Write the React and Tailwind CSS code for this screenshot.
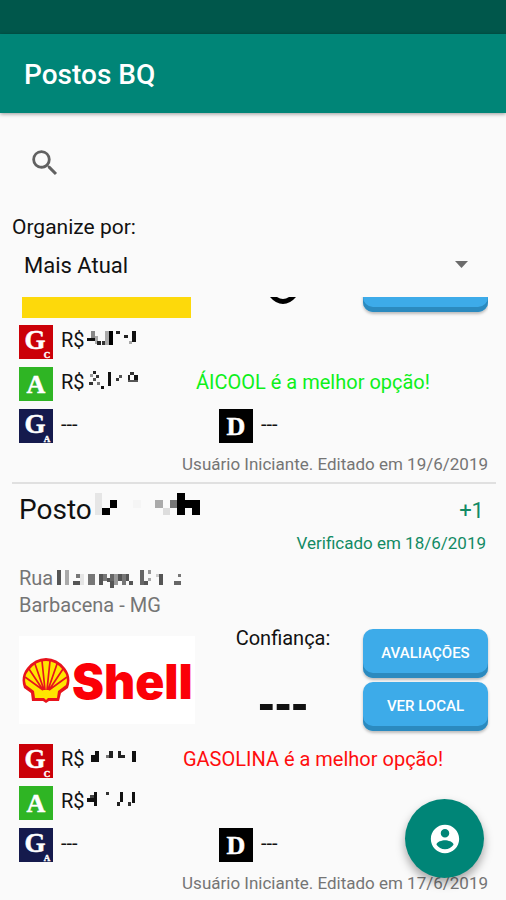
import React from "react";

const stations = {
  first: {
    fuels: [
      [[8,39,26,9,"#111"],[22,19,10,20,"#888"],[32,34,10,24,"#aaa"],[40,49,12,11,"#222"],[54,49,10,11,"#333"],[64,19,11,40,"#aaa"],[75,19,11,40,"#000"],[97,17,10,9,"#222"],[121,29,10,10,"#222"],[134,47,10,11,"#aaa"],[145,17,10,33,"#111"]],
      [[28,13,9,9,"#222"],[18,21,9,9,"#999"],[37,23,9,9,"#333"],[27,33,10,10,"#555"],[16,46,10,9,"#333"],[38,44,10,10,"#777"],[51,58,9,8,"#111"],[73,15,9,42,"#111"],[95,34,10,9,"#333"],[105,25,10,9,"#555"],[131,24,8,22,"#222"],[139,15,12,10,"#333"],[151,24,10,22,"#111"],[131,38,30,8,"#555"]],
    ],
  },
  second: {
    fuels: [
      [[22,33,22,20,"#111"],[34,22,10,12,"#111"],[66,32,10,9,"#777"],[76,22,10,19,"#222"],[101,22,9,19,"#222"],[110,32,12,9,"#222"],[145,21,10,34,"#111"]],
      [[8,37,30,10,"#111"],[18,27,12,10,"#444"],[30,18,9,42,"#111"],[65,18,9,9,"#333"],[108,18,9,30,"#111"],[98,49,10,10,"#222"],[144,18,9,34,"#111"],[131,49,11,11,"#333"]],
    ],
  },
};

const nameBlocks = [[0,0,22,67,"#e6e6e6"],[22,45,23,22,"#000"],[45,22,22,23,"#000"],[114,22,23,23,"#f5f5f5"],[180,22,23,23,"#aaa"],[203,45,22,22,"#ddd"],[225,22,22,23,"#777"],[247,0,22,67,"#000"],[269,22,46,23,"#000"],[292,45,23,22,"#000"]];

const streetBlocks = [[0,4,12,44,"#555"],[24,4,12,44,"#aaa"],[48,36,22,12,"#555"],[58,14,12,12,"#777"],[70,14,10,34,"#e5e5e5"],[92,14,22,34,"#777"],[126,14,11,34,"#555"],[137,14,12,22,"#777"],[149,26,10,12,"#555"],[160,14,11,22,"#666"],[160,36,11,20,"#555"],[171,14,12,34,"#999"],[183,14,11,22,"#555"],[196,14,10,34,"#777"],[206,14,11,22,"#555"],[217,36,10,12,"#555"],[250,4,12,44,"#666"],[262,36,10,12,"#555"],[272,4,11,11,"#999"],[272,26,11,11,"#aaa"],[306,14,11,34,"#555"],[296,14,10,11,"#ccc"],[362,14,11,11,"#777"],[350,36,23,12,"#666"]];

function Blocks({ blocks, className, viewBox }) {
  return (
    <svg className={className} viewBox={viewBox} aria-hidden="true" shapeRendering="crispEdges">
      {blocks.map(([x, y, w, h, fill], i) => (
        <rect key={i} x={x} y={y} width={w} height={h} fill={fill} />
      ))}
    </svg>
  );
}

function FuelIcon({ letter, sub, color }) {
  return (
    <svg className="size-[34px] shrink-0" viewBox="0 0 34 34" fill="#fff" fontFamily="'Liberation Serif', serif" fontWeight="700">
      <rect width="34" height="34" className={color} />
      <text x={sub ? 16 : 17} y={sub ? 24 : 26} fontSize={sub ? 27 : 26} textAnchor="middle" stroke="#fff" strokeWidth="0.5">{letter}</text>
      {sub && <text x="28" y="33" fontSize="9" textAnchor="middle" stroke="#fff" strokeWidth="0.4">{sub}</text>}
    </svg>
  );
}

function Price({ blocks }) {
  return (
    <div className="flex w-[79px] shrink-0 items-center">
      <span className="w-[23px] pb-1">R$</span>
      <Blocks blocks={blocks} className="h-[34px] w-[56px]" viewBox="0 0 168 102" />
    </div>
  );
}

function Fuels({ prices, best, edited }) {
  return (
    <>
      <div className="flex flex-col gap-2 text-[20px] leading-6">
        <div className="flex items-center gap-2">
          <FuelIcon letter="G" sub="C" color="fill-[#cb0008]" />
          <Price blocks={prices[0]} />
          {best === "gasolina" && <p className="flex-1 pr-[10px] pb-1 text-center text-[#ff0d0d]">GASOLINA é a melhor opção!</p>}
        </div>
        <div className="flex items-center gap-2">
          <FuelIcon letter="A" color="fill-[#2fb524]" />
          <Price blocks={prices[1]} />
          {best === "alcool" && <p className="flex-1 pr-[10px] pb-1 text-center text-[#0df01a]">ÁICOOL é a melhor opção!</p>}
        </div>
        <div className="flex">
          <div className="flex w-[200px] items-center gap-2">
            <FuelIcon letter="G" sub="A" color="fill-[#151a4d]" />
            <span className="pb-1">---</span>
          </div>
          <div className="flex items-center gap-2">
            <FuelIcon letter="D" color="fill-black" />
            <span className="pb-1">---</span>
          </div>
        </div>
      </div>
      <p className="mt-[9px] text-right text-[17px] leading-6 text-[#757575]">{edited}</p>
    </>
  );
}

function BlueButton({ children, label }) {
  return (
    <button
      type="button"
      aria-label={label}
      className="h-[49px] w-[125px] shrink-0 rounded-[10px] bg-[#3dabe9] text-[15px] font-medium text-white shadow-[inset_0_-5px_0_#2b8abf,0_2px_3px_rgba(0,0,0,0.25)]"
    >
      {children}
    </button>
  );
}

function ShellLogo() {
  return (
    <div className="mt-[10px] flex h-[88px] w-[176px] shrink-0 items-center bg-white pl-[2px]">
      <svg className="h-[46px] w-[50px] shrink-0" viewBox="0 0 50 46" aria-hidden="true">
        <path d="M11 44 L10 36 L3 31 Q-1 20 6 11 Q14 1 25 1 Q36 1 44 11 Q51 20 47 31 L40 36 L38 44 L28 44 L25 46 L22 44 Z" fill="#e8141c" />
        <path d="M14 41 L13 34 L5 28 Q2 20 8 13 Q15 4 25 4 Q35 4 42 13 Q48 20 45 28 L37 34 L36 41 L27 41 L25 43 L23 41 Z" fill="#ffe600" />
        <path d="M22 33 L4 20 M22 33 L8 12 M23 33 L14 7 M24 33 L21 4 M26 33 L29 4 M27 33 L36 7 M28 33 L42 12 M28 33 L46 20" stroke="#e8141c" strokeWidth="1.7" fill="none" />
      </svg>
      <span className="pt-1 pl-px font-['Inter'] text-[48px] leading-none font-black text-[#fb0007]">Shell</span>
    </div>
  );
}

export default function App() {
  return (
    <div className="min-h-screen bg-[#fafafa] font-['Roboto',sans-serif] text-[#111]">
      <div className="h-[34px] bg-[#00574b]" />
      <header className="flex h-[79px] items-center bg-[#008577] pt-[2px] pl-6 shadow-[0_1px_4px_rgba(0,0,0,0.4)]">
        <h1 className="text-[28px] font-medium text-white">Postos BQ</h1>
      </header>

      <div className="flex h-[100px] items-center pl-7">
        <button type="button" aria-label="Pesquisar">
          <svg className="size-[34px]" viewBox="0 0 24 24" fill="#616161">
            <path d="M15.5 14h-.79l-.28-.27A6.471 6.471 0 0 0 16 9.5 6.5 6.5 0 1 0 9.5 16c1.61 0 3.09-.59 4.23-1.57l.27.28v.79l5 4.99L20.49 19l-4.99-5zm-6 0C7.01 14 5 11.99 5 9.5S7.01 5 9.5 5 14 7.01 14 9.5 11.99 14 9.5 14z" />
          </svg>
        </button>
      </div>

      <label htmlFor="order" className="block px-3 text-[21px] leading-7">Organize por:</label>
      <div className="relative mb-2">
        <select id="order" className="h-12 w-full appearance-none bg-transparent px-6 text-[22px]">
          <option>Mais Atual</option>
        </select>
        <svg className="pointer-events-none absolute top-5 right-[38px] h-[7px] w-[13px]" viewBox="0 0 13 7" fill="#6b6b6b">
          <path d="M0 0h13L6.5 7z" />
        </svg>
      </div>

      <main>
        <article className="pr-[18px] pb-[6px] pl-[19px]">
          <div className="flex h-7 items-start overflow-hidden">
            <div className="ml-[3px] h-[21px] w-[169px] shrink-0 bg-[#fdd90b]" />
            <div className="flex flex-1 justify-center pl-3">
              <svg className="h-2 w-[26px]" viewBox="0 0 26 8" aria-hidden="true">
                <path d="M0 0h7q6 4 12 0h7Q20 7 13 7T0 0z" fill="#000" />
              </svg>
            </div>
            <div className="flex h-[15px] items-end">
              <BlueButton label="Ver local" />
            </div>
          </div>
          <Fuels prices={stations.first.fuels} best="alcool" edited="Usuário Iniciante. Editado em 19/6/2019" />
        </article>

        <hr className="mx-3 mr-[10px] border-t-2 border-[#e0e0e0]" />

        <article className="pt-2 pr-[18px] pl-[19px]">
          <div className="flex items-center justify-between pr-1">
            <h2 className="flex items-center text-[28px] leading-9">
              Posto
              <Blocks blocks={nameBlocks} className="mb-3 ml-[3px] h-[23px] w-[105px]" viewBox="0 0 315 69" />
            </h2>
            <span className="text-[22px] text-[#128a64]">+1</span>
          </div>
          <p className="mt-[3px] pr-[2px] text-right text-[17px] leading-6 text-[#128a64]">Verificado em 18/6/2019</p>
          <address className="mt-[10px] text-[20px] leading-[27px] text-[#757575] not-italic">
            <span className="flex items-center">
              Rua
              <Blocks blocks={streetBlocks} className="ml-1 h-[20px] w-[125px]" viewBox="0 0 375 60" />
            </span>
            Barbacena - MG
          </address>

          <div className="mt-[7px] flex">
            <ShellLogo />
            <div className="flex flex-1 flex-col items-center pl-2">
              <p className="text-[20px] leading-6">Confiança:</p>
              <p className="mt-[25px] font-['Liberation_Sans'] text-[50px] leading-[56px] font-bold">---</p>
            </div>
            <div className="flex flex-col gap-1 pt-[3px]">
              <BlueButton>AVALIAÇÕES</BlueButton>
              <BlueButton>VER LOCAL</BlueButton>
            </div>
          </div>

          <div className="mt-[13px]">
            <Fuels prices={stations.second.fuels} best="gasolina" edited="Usuário Iniciante. Editado em 17/6/2019" />
          </div>
        </article>
      </main>

      <button
        type="button"
        aria-label="Conta"
        className="fixed right-[22px] bottom-[22px] flex size-[79px] items-center justify-center rounded-full bg-[#008577] shadow-[0_5px_10px_rgba(0,0,0,0.35)]"
      >
        <svg className="size-[34px]" viewBox="0 0 24 24" fill="#fff">
          <path d="M12 2C6.480 2 2 6.480 2 12s4.480 10 10 10 10-4.480 10-10S17.520 2 12 2zm0 3c1.660 0 3 1.340 3 3s-1.340 3-3 3-3-1.340-3-3 1.340-3 3-3zm0 14.200c-2.500 0-4.710-1.280-6-3.220.03-1.990 4-3.080 6-3.080 1.990 0 5.970 1.090 6 3.080-1.290 1.940-3.500 3.220-6 3.220z" />
        </svg>
      </button>
    </div>
  );
}
